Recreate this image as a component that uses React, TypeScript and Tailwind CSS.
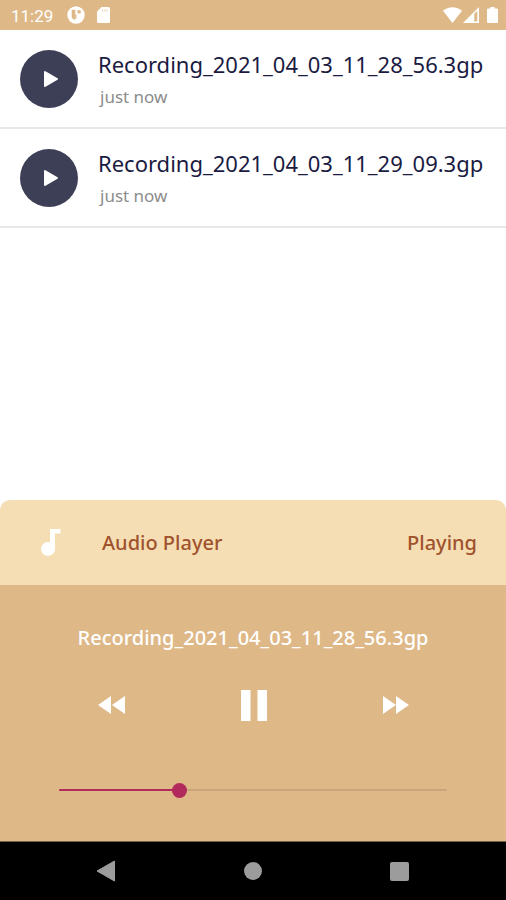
import { useState } from "react";

const recordings = [
  { name: "Recording_2021_04_03_11_28_56.3gp", age: "just now" },
  { name: "Recording_2021_04_03_11_29_09.3gp", age: "just now" },
];

function StatusBar() {
  return (
    <header className="flex h-[30px] items-center bg-[#deb887] pl-[11px] pr-[8px] text-white">
      <span className="mt-[2px] font-['Roboto',sans-serif] text-[17px] leading-5">11:29</span>
      <svg className="ml-[14px] size-[18px]" viewBox="0 0 18 18" aria-hidden="true">
        <circle cx="9" cy="9" r="8.7" fill="#fff" />
        <path
          d="M8.300 3.700H4.700v6.500q0 3 3.600 3.600z"
          fill="#deb887"
        />
        <path d="M10.500 4.200h3.200v3.200h-3.200z" fill="#deb887" />
        <path d="M8.300 8.500h1.200v4H8.300z" fill="#deb887" />
      </svg>
      <svg className="ml-3 h-4 w-[13px]" viewBox="0 0 13 16" aria-hidden="true">
        <path
          d="M4.5 0H11.5Q13 0 13 1.5V14.5Q13 16 11.5 16H1.5Q0 16 0 14.5V4.5z"
          fill="#fff"
        />
        <path d="M5 2.5h1.2v2H5zM7.3 2.5h1.2v2H7.3zM9.6 2.5h1.2v2H9.6z" fill="#ecd3b1" />
      </svg>
      <svg className="ml-auto h-4 w-[19px]" viewBox="0 0 19 16" aria-hidden="true">
        <path d="M9.500 16 0 3.800C5.500-.9 13.500-.9 19 3.800z" fill="#fff" />
      </svg>
      <svg className="ml-px size-4" viewBox="0 0 16 16" aria-hidden="true">
        <path d="M16 0v16H0zM11.300 6.700v7.800h3V3.700z" fill="#fff" fillRule="evenodd" />
      </svg>
      <svg className="ml-2 h-4 w-[11px]" viewBox="0 0 11 16" aria-hidden="true">
        <path
          d="M3.300 0h4.400v1.600H10q1 0 1 1V15q0 1-1 1H1q-1 0-1-1V2.600q0-1 1-1h2.300z"
          fill="#fff"
        />
      </svg>
    </header>
  );
}

function RecordingRow({ name, age }: { name: string; age: string }) {
  return (
    <li className="flex items-center gap-5 border-b-2 border-[#e8e8e8] pl-5 pr-4 pt-5 pb-[19px]">
      <button
        type="button"
        aria-label={`Play ${name}`}
        className="flex size-[58px] shrink-0 items-center justify-center rounded-full bg-[#3d3f56]"
      >
        <svg className="ml-[3px] h-[18px] w-4" viewBox="0 0 16 18" aria-hidden="true">
          <path
            d="M2 2v14l12-7z"
            fill="#fff"
            stroke="#fff"
            strokeWidth="2"
            strokeLinejoin="round"
          />
        </svg>
      </button>
      <div className="min-w-0">
        <p className="text-[22px] leading-7 text-[#1b1b42]">{name}</p>
        <p className="pl-[2px] pt-2 text-[17px] leading-[22px] text-[#8c8c8c]">{age}</p>
      </div>
    </li>
  );
}

function Player({ title }: { title: string }) {
  const [progress, setProgress] = useState(31);

  return (
    <section>
      <div className="flex h-[85px] items-center rounded-t-[10px] bg-[#f5deb3] pl-[41px] pr-[29px] text-[20px] font-medium text-[#a0522d]">
        <svg className="h-[27px] w-5" viewBox="0 0 20 27" aria-hidden="true">
          <path
            d="M9 0h10.500v4.500H14V19.500A7 7 0 1 1 9 13.200z"
            fill="#fff"
          />
        </svg>
        <h2 className="ml-[41px]">Audio Player</h2>
        <span className="ml-auto">Playing</span>
      </div>

      <div className="bg-[#deb887] pb-10 pt-[38px]">
        <p className="text-center text-[20px] font-medium leading-[30px] text-white">{title}</p>

        <div className="mt-8 flex items-center justify-between pl-[98px] pr-[96px] text-white">
          <button type="button" aria-label="Rewind">
            <svg className="h-[18px] w-7" viewBox="0 0 28 18" fill="currentColor" aria-hidden="true">
              <path d="M13 0v18L0 9zM27 0v18L14 9z" />
            </svg>
          </button>
          <button type="button" aria-label="Pause">
            <svg className="h-10 w-7" viewBox="0 0 28 40" fill="currentColor" aria-hidden="true">
              <path d="M1 5h9.500v31H1zM17.500 5H27v31h-9.500z" />
            </svg>
          </button>
          <button type="button" aria-label="Fast forward">
            <svg className="h-[18px] w-7" viewBox="0 0 28 18" fill="currentColor" aria-hidden="true">
              <path d="M1 0v18l13-9zM14 0v18l13-9z" />
            </svg>
          </button>
        </div>

        <div className="relative mx-[59px] mt-[54px] flex h-[22px] items-center">
          <div className="h-[2px] w-full rounded-full bg-[#c8a67a]">
            <div className="h-full rounded-full bg-[#b12a5b]" style={{ width: `${progress}%` }} />
          </div>
          <input
            type="range"
            aria-label="Playback position"
            min={0}
            max={100}
            value={progress}
            onChange={(e) => setProgress(Number(e.target.value))}
            className="absolute inset-y-0 -left-2 w-[calc(100%+16px)] appearance-none bg-transparent [&::-webkit-slider-thumb]:size-[15px] [&::-webkit-slider-thumb]:appearance-none [&::-webkit-slider-thumb]:rounded-full [&::-webkit-slider-thumb]:bg-[#b12a5b]"
          />
        </div>
      </div>
    </section>
  );
}

function NavigationBar() {
  return (
    <nav className="flex h-[59px] items-center justify-between border-t border-[#75644e] bg-black pl-24 pr-[97px] text-[#9c9c9c]">
      <button type="button" aria-label="Back">
        <svg className="h-[22px] w-5" viewBox="0 0 20 22" fill="currentColor" aria-hidden="true">
          <path d="M18.500 1v20L1 11z" stroke="currentColor" strokeLinejoin="round" />
        </svg>
      </button>
      <button type="button" aria-label="Home" className="size-[18px] rounded-full bg-[#9c9c9c]" />
      <button type="button" aria-label="Recent apps" className="size-[19px] rounded-[2px] bg-[#9c9c9c]" />
    </nav>
  );
}

export default function App() {
  return (
    <div className="flex min-h-screen flex-col bg-white font-['Noto_Sans',sans-serif]">
      <StatusBar />
      <main className="flex flex-1 flex-col justify-between">
        <ul>
          {recordings.map((recording) => (
            <RecordingRow key={recording.name} {...recording} />
          ))}
        </ul>
        <Player title={recordings[0].name} />
      </main>
      <NavigationBar />
    </div>
  );
}
